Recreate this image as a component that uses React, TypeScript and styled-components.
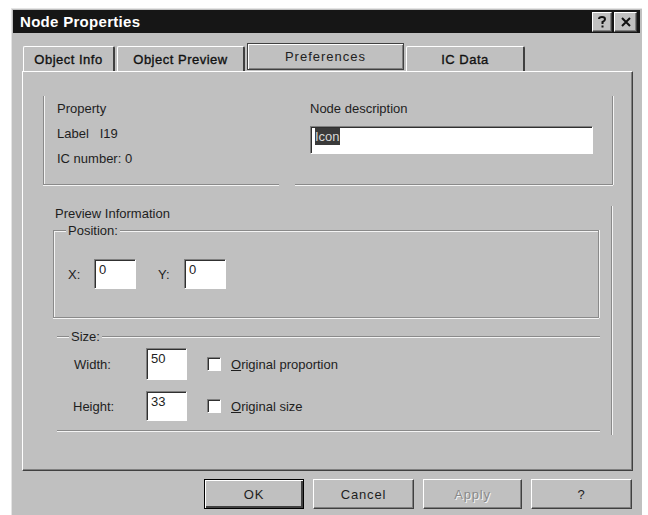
import styled, { createGlobalStyle, css } from "styled-components";

const GlobalStyle = createGlobalStyle`
  body {
    margin: 0;
    background: #fff;
    font-family: "Liberation Sans", Arial, sans-serif;
  }
  * { box-sizing: border-box; }
`;

const FACE = "#c0c0c0";

const raised = css`
  border: 1px solid;
  border-color: #fff #404040 #404040 #fff;
  box-shadow: inset -1px -1px 0 #808080;
`;

const sunken = css`
  border: 1px solid;
  border-color: #808080 #fff #fff #808080;
  box-shadow: inset 1px 1px 0 #303030;
`;

const Window = styled.div`
  margin: 8px 0 0 11px;
  width: 631px;
  height: 507px;
  padding: 1px;
  background: ${FACE};
  border-top: 1px solid #e4e4e4;
  border-left: 1px solid #e4e4e4;
  display: flex;
  flex-direction: column;
`;

const TitleBar = styled.div`
  height: 23px;
  margin-right: 1px;
  background: #161616;
  display: flex;
  align-items: center;
  padding: 0 3px 0 7px;
  color: #fff;
  font-size: 15px;
  font-weight: bold;
  letter-spacing: 0.3px;
`;

const CaptionButtons = styled.div`
  margin-left: auto;
  display: flex;
  gap: 2px;
`;

const CaptionButton = styled.div<{ $w: number }>`
  ${raised};
  width: ${(p) => p.$w}px;
  height: 20px;
  background: ${FACE};
  color: #111;
  display: flex;
  align-items: center;
  justify-content: center;
`;

const Body = styled.div`
  padding: 10px 9px 0 9px;
  display: flex;
  flex-direction: column;
`;

const TabStrip = styled.div`
  display: flex;
  align-items: flex-end;
  height: 28px;
  padding-left: 1px;
`;

const Tab = styled.div<{ $w: number; $active?: boolean }>`
  width: ${(p) => p.$w}px;
  height: 25px;
  margin-right: 2px;
  display: flex;
  align-items: center;
  justify-content: center;
  font-size: 13px;
  letter-spacing: 0.5px;
  color: #111;
  -webkit-text-stroke: 0.35px #111;
  border-top: 1px solid #fff;
  border-left: 1px solid #fff;
  border-right: 2px solid #404040;
  border-radius: 2px 2px 0 0;

  ${(p) =>
    p.$active &&
    css`
      height: 27px;
      margin-bottom: 1px;
      letter-spacing: 1px;
      -webkit-text-stroke: 0;
      color: #222;
      border: 1px solid #404040;
      box-shadow: inset 1px 1px 0 #fff, inset -1px -1px 0 #808080;
      border-radius: 0;
    `}
`;

const Panel = styled.div`
  width: 611px;
  height: 400px;
  border-left: 1px solid #fff;
  border-top: 1px solid #fff;
  border-right: 1px solid #404040;
  border-bottom: 1px solid #404040;
  box-shadow: inset -1px -1px 0 #808080;
  padding: 24px 0 0 17px;
  display: flex;
  flex-direction: column;
`;

type Edges = { t?: boolean; r?: boolean; b?: boolean; l?: boolean };

const Group = styled.div<{ $w: number; $h: number; $edges: Edges }>`
  width: ${(p) => p.$w}px;
  height: ${(p) => p.$h}px;
  display: flex;
  flex-direction: column;
  border-style: solid;
  border-color: #8a8a8a;
  border-width: ${(p) =>
    `${p.$edges.t ? 1 : 0}px ${p.$edges.r ? 1 : 0}px ${p.$edges.b ? 1 : 0}px ${
      p.$edges.l ? 1 : 0
    }px`};
  box-shadow: ${(p) =>
    [
      p.$edges.l && "inset 1px 0 0 #f4f4f4",
      p.$edges.t && "inset 0 1px 0 #f4f4f4",
      p.$edges.r && "1px 0 0 #f4f4f4",
      p.$edges.b && "0 1px 0 #f4f4f4",
    ]
      .filter(Boolean)
      .join(", ") || "none"};
`;

const Text = styled.div`
  font-size: 13px;
  color: #1e1e1e;
  line-height: 15px;
`;

const InfoLine = styled(Text)`
  line-height: 25px;
`;

const Legend = styled(Text)`
  align-self: flex-start;
  margin: -8px 0 0 12px;
  padding: 0 2px;
  background: ${FACE};
`;

const TopRow = styled.div`
  display: flex;
  gap: 16px;
  padding-left: 3px;
`;

const PropertyBox = styled(Group)`
  padding: 0 0 0 13px;
`;

const NodeBox = styled(Group)`
  padding: 0 0 0 15px;
`;

const Field = styled.div<{ $w: number; $h: number }>`
  ${sunken};
  width: ${(p) => p.$w}px;
  height: ${(p) => p.$h}px;
  background: #fff;
  font-size: 13px;
  color: #222;
  padding: 3px 0 0 4px;
  line-height: 14px;
`;

const Selected = styled.span`
  background: #3a3a3a;
  color: #d8d8d8;
  padding: 1px 0;
`;

const PreviewBox = styled(Group)`
  margin-top: 21px;
  padding: 0;
`;

const PositionBox = styled(Group)`
  margin: 9px 0 0 13px;
`;

const FieldRow = styled.div`
  display: flex;
  align-items: center;
`;

const AxisLabel = styled(Text)<{ $w: number }>`
  width: ${(p) => p.$w}px;
`;

const SizeBox = styled(Group)`
  margin: 18px 0 0 17px;
  padding-top: 0;
`;

const SizeRow = styled.div<{ $gap: number }>`
  display: flex;
  align-items: center;
  margin-top: ${(p) => p.$gap}px;
`;

const SizeLabel = styled(Text)`
  width: 89px;
  padding-left: 17px;
`;

const Check = styled.div`
  ${sunken};
  width: 14px;
  height: 14px;
  background: #fff;
  margin: 0 10px 0 20px;
`;

const ButtonRow = styled.div`
  display: flex;
  justify-content: flex-end;
  gap: 9px;
  margin-top: 8px;
`;

const Button = styled.div<{ $default?: boolean; $disabled?: boolean; $w: number }>`
  ${raised};
  width: ${(p) => p.$w}px;
  height: 30px;
  display: flex;
  align-items: center;
  justify-content: center;
  font-size: 13px;
  letter-spacing: 0.8px;
  color: ${(p) => (p.$disabled ? "#8a8a8a" : "#1e1e1e")};
  text-shadow: ${(p) => (p.$disabled ? "1px 1px 0 #f4f4f4" : "none")};

  ${(p) =>
    p.$default &&
    css`
      border: 1px solid #000;
      box-shadow: inset 1px 1px 0 #fff, inset -2px -2px 0 #404040;
    `}
`;

export default function App() {
  return (
    <>
      <GlobalStyle />
      <Window>
        <TitleBar>
          Node Properties
          <CaptionButtons>
            <CaptionButton $w={20}>
              <svg width="10" height="12" viewBox="0 0 10 12">
                <path d="M2 3 Q2 1 5 1 Q8 1 8 3.2 Q8 5 5.5 6 L5.5 8" fill="none" stroke="#111" strokeWidth="2" />
                <rect x="4.5" y="9.5" width="2" height="2" fill="#111" />
              </svg>
            </CaptionButton>
            <CaptionButton $w={23}>
              <svg width="10" height="10" viewBox="0 0 10 10">
                <path d="M1 1 L9 9 M9 1 L1 9" stroke="#111" strokeWidth="2" />
              </svg>
            </CaptionButton>
          </CaptionButtons>
        </TitleBar>

        <Body>
          <TabStrip>
            <Tab $w={92}>Object Info</Tab>
            <Tab $w={128}>Object Preview</Tab>
            <Tab $w={157} $active>
              Preferences
            </Tab>
            <Tab $w={119}>IC Data</Tab>
          </TabStrip>

          <Panel>
            <TopRow>
              <PropertyBox $w={236} $h={89} $edges={{ l: true, b: true }}>
                <InfoLine>Property</InfoLine>
                <InfoLine>Label&nbsp;&nbsp;&nbsp;I19</InfoLine>
                <InfoLine>IC number: 0</InfoLine>
              </PropertyBox>
              <NodeBox $w={318} $h={89} $edges={{ r: true, b: true }}>
                <InfoLine>Node description</InfoLine>
                <Field $w={283} $h={28} style={{ marginTop: 5 }}>
                  <Selected>Icon</Selected>
                </Field>
              </NodeBox>
            </TopRow>

            <PreviewBox $w={572} $h={229} $edges={{ r: true }}>
              <Text style={{ paddingLeft: 15 }}>Preview Information</Text>
              <PositionBox $w={546} $h={88} $edges={{ t: true, r: true, b: true, l: true }}>
                <Legend>Position:</Legend>
                <FieldRow style={{ marginTop: 21, paddingLeft: 14 }}>
                  <AxisLabel $w={26}>X:</AxisLabel>
                  <Field $w={42} $h={30}>0</Field>
                  <AxisLabel $w={26} style={{ marginLeft: 22 }}>
                    Y:
                  </AxisLabel>
                  <Field $w={42} $h={30}>0</Field>
                </FieldRow>
              </PositionBox>

              <SizeBox $w={543} $h={95} $edges={{ t: true, b: true }}>
                <Legend>Size:</Legend>
                <SizeRow $gap={4}>
                  <SizeLabel>Width:</SizeLabel>
                  <Field $w={41} $h={32}>50</Field>
                  <Check />
                  <Text>
                    <u>O</u>riginal proportion
                  </Text>
                </SizeRow>
                <SizeRow $gap={11}>
                  <SizeLabel style={{ paddingLeft: 16 }}>Height:</SizeLabel>
                  <Field $w={41} $h={30}>33</Field>
                  <Check />
                  <Text>
                    <u>O</u>riginal size
                  </Text>
                </SizeRow>
              </SizeBox>
            </PreviewBox>
          </Panel>

          <ButtonRow>
            <Button $w={100} $default>
              OK
            </Button>
            <Button $w={101}>Cancel</Button>
            <Button $w={99} $disabled>
              Apply
            </Button>
            <Button $w={101}>?</Button>
          </ButtonRow>
        </Body>
      </Window>
    </>
  );
}
